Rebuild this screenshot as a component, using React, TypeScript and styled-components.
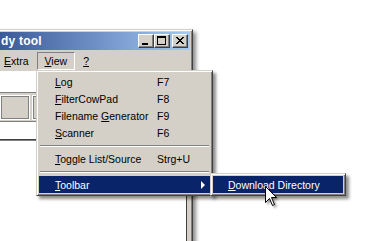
import React from 'react';
import styled, { createGlobalStyle } from 'styled-components';

const GlobalStyle = createGlobalStyle`
  html, body {
    margin: 0;
    padding: 0;
    background: #ffffff;
  }
  body {
    width: 366px;
    height: 241px;
    overflow: hidden;
    font-family: "Liberation Sans", Arial, sans-serif;
    font-size: 10.5px;
  }
`;

const Desktop = styled.div`
  position: relative;
  width: 366px;
  height: 241px;
  overflow: hidden;
  background: #ffffff;
  padding-top: 29px;
  box-sizing: border-box;
`;

const Window = styled.div`
  margin-left: -4px;
  width: 197px;
  height: 240px;
  box-sizing: border-box;
  background: #d4d0c8;
  border-top: 1px solid #d4d0c8;
  border-right: 1px solid #404040;
  box-shadow: inset 0 1px 0 #ffffff, inset -1px 0 0 #808080, 3px 3px 4px rgba(0, 0, 0, 0.45);
  padding: 2px 2px 0 4px;
  display: flex;
  flex-direction: column;
`;

const TitleBar = styled.div`
  height: 18px;
  flex: none;
  display: flex;
  align-items: center;
  padding: 0 2px 0 1px;
  background: linear-gradient(to right, #3b5a98 0%, #6e8fc6 50%, #a6caf0 100%);
`;

const Title = styled.span`
  flex: 1;
  color: #ffffff;
  font-weight: bold;
  font-size: 12px;
  letter-spacing: 0.2px;
  white-space: nowrap;
`;

const CaptionButton = styled.div<{ $gap?: number }>`
  width: 16px;
  height: 14px;
  box-sizing: border-box;
  margin-left: ${p => p.$gap ?? 0}px;
  background: #d4d0c8;
  border: 1px solid;
  border-color: #ffffff #404040 #404040 #ffffff;
  box-shadow: inset -1px -1px 0 #808080;
  display: flex;
  align-items: center;
  justify-content: center;
`;

const MenuBar = styled.div`
  height: 21px;
  flex: none;
  display: flex;
  align-items: flex-start;
  padding-top: 2px;
  margin-left: -4px;
  box-sizing: border-box;
`;

const BarItem = styled.div<{ $open?: boolean }>`
  height: 18px;
  box-sizing: border-box;
  padding: 0 7px;
  display: flex;
  align-items: center;
  border: 1px solid;
  border-color: ${p => (p.$open ? '#808080 #ffffff #ffffff #808080' : 'transparent')};
  color: #000000;
  white-space: nowrap;
`;

const AddressStrip = styled.div`
  height: 21px;
  flex: none;
  background: #ffffff;
  border-bottom: 1px solid #808080;
`;

const ToolStrip = styled.div`
  height: 29px;
  flex: none;
  box-sizing: border-box;
  display: flex;
  align-items: center;
  gap: 2px;
  border-bottom: 1px solid #808080;
`;

const ToolBox = styled.div<{ $w: number }>`
  width: ${p => p.$w}px;
  height: 25px;
  box-sizing: border-box;
  border: 1px solid #ffffff;
  box-shadow: inset -1px -1px 0 #808080, inset 1px 1px 0 #808080;
`;

const InputStrip = styled.div`
  height: 17px;
  flex: none;
  background: #ffffff;
`;

const ListView = styled.div`
  flex: 1;
  margin-right: 3px;
  background: #ffffff;
  border-top: 1px solid #404040;
  border-right: 1px solid #404040;
  box-shadow: inset 0 1px 0 #808080;
`;

const PopupMenu = styled.div<{ $left: number; $top: number; $width: number }>`
  position: absolute;
  left: ${p => p.$left}px;
  top: ${p => p.$top}px;
  width: ${p => p.$width}px;
  box-sizing: border-box;
  background: #d4d0c8;
  border: 1px solid;
  border-color: #d4d0c8 #404040 #404040 #d4d0c8;
  box-shadow: inset 1px 1px 0 #ffffff, inset -1px -1px 0 #808080, 3px 3px 3px rgba(0, 0, 0, 0.45);
  padding: 2px;
`;

const Row = styled.div<{ $active?: boolean; $pad?: number }>`
  height: 17px;
  display: grid;
  grid-template-columns: 102px 1fr auto;
  align-items: center;
  padding-left: ${p => p.$pad ?? 16}px;
  background: ${p => (p.$active ? '#0a246a' : 'transparent')};
  color: ${p => (p.$active ? '#ffffff' : '#000000')};
  white-space: nowrap;
`;

const Shortcut = styled.span`
  white-space: nowrap;
`;

const SubArrow = styled.span`
  width: 0;
  height: 0;
  margin-right: 5px;
  border-top: 4px solid transparent;
  border-bottom: 4px solid transparent;
  border-left: 4px solid currentColor;
`;

const Separator = styled.div`
  height: 9px;
  box-sizing: border-box;
  padding: 4px 1px 3px;
  &::after {
    content: '';
    display: block;
    height: 0;
    border-top: 1px solid #808080;
    border-bottom: 1px solid #ffffff;
  }
`;

const Pointer = styled.svg`
  position: absolute;
  left: 265px;
  top: 186px;
  filter: drop-shadow(2px 2px 1px rgba(0, 0, 0, 0.35));
`;

type Item = { label: React.ReactNode; key?: string } | 'sep';

const viewItems: Item[] = [
  { label: <><u>L</u>og</>, key: 'F7' },
  { label: <><u>F</u>ilterCowPad</>, key: 'F8' },
  { label: <>Filename <u>G</u>enerator</>, key: 'F9' },
  { label: <><u>S</u>canner</>, key: 'F6' },
  'sep',
  { label: <><u>T</u>oggle List/Source</>, key: 'Strg+U' },
  'sep',
];

export default function App() {
  return (
    <Desktop>
      <GlobalStyle />
      <Window>
        <TitleBar>
          <Title>dy tool</Title>
          <CaptionButton>
            <svg width="14" height="12" viewBox="0 0 14 12">
              <rect x="3" y="8" width="6" height="2" fill="#000" />
            </svg>
          </CaptionButton>
          <CaptionButton>
            <svg width="14" height="12" viewBox="0 0 14 12">
              <rect x="2.5" y="1.5" width="8" height="8" fill="none" stroke="#000" />
              <rect x="2" y="1" width="9" height="2" fill="#000" />
            </svg>
          </CaptionButton>
          <CaptionButton $gap={2}>
            <svg width="14" height="12" viewBox="0 0 14 12">
              <path d="M3 2 L10 9 M4 2 L11 9 M10 2 L3 9 M11 2 L4 9" stroke="#000" strokeWidth="1" />
            </svg>
          </CaptionButton>
        </TitleBar>
        <MenuBar>
          <BarItem><span><u>E</u>xtra</span></BarItem>
          <BarItem $open><span><u>V</u>iew</span></BarItem>
          <BarItem><span><u>?</u></span></BarItem>
        </MenuBar>
        <AddressStrip />
        <ToolStrip>
          <ToolBox $w={30} />
          <ToolBox $w={60} />
        </ToolStrip>
        <InputStrip />
        <ListView />
      </Window>

      <PopupMenu $left={36} $top={70} $width={177}>
        {viewItems.map((it, i) =>
          it === 'sep' ? (
            <Separator key={i} />
          ) : (
            <Row key={i}>
              <span>{it.label}</span>
              <Shortcut>{it.key}</Shortcut>
              <span />
            </Row>
          )
        )}
        <Row $active>
          <span><u>T</u>oolbar</span>
          <span />
          <SubArrow />
        </Row>
      </PopupMenu>

      <PopupMenu $left={210} $top={173} $width={136}>
        <Row $active $pad={15}>
          <span><u>D</u>ownload Directory</span>
        </Row>
      </PopupMenu>

      <Pointer width="13" height="21" viewBox="0 0 13 21">
        <path
          d="M0.5 0.5 L0.5 16.5 L4.5 12.5 L7.5 19.5 L9.5 18.5 L6.5 11.5 L11.5 11.5 Z"
          fill="#ffffff"
          stroke="#000000"
          strokeWidth="1"
        />
      </Pointer>
    </Desktop>
  );
}
